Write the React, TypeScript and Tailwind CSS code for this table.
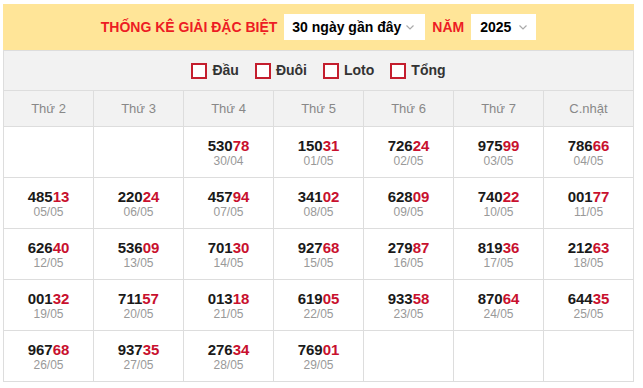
const rows: [string, string][][] = [
  [["", ""], ["", ""], ["53078", "30/04"], ["15031", "01/05"], ["72624", "02/05"], ["97599", "03/05"], ["78666", "04/05"]],
  [["48513", "05/05"], ["22024", "06/05"], ["45794", "07/05"], ["34102", "08/05"], ["62809", "09/05"], ["74022", "10/05"], ["00177", "11/05"]],
  [["62640", "12/05"], ["53609", "13/05"], ["70130", "14/05"], ["92768", "15/05"], ["27987", "16/05"], ["81936", "17/05"], ["21263", "18/05"]],
  [["00132", "19/05"], ["71157", "20/05"], ["01318", "21/05"], ["61905", "22/05"], ["93358", "23/05"], ["87064", "24/05"], ["64435", "25/05"]],
  [["96768", "26/05"], ["93735", "27/05"], ["27634", "28/05"], ["76901", "29/05"], ["", ""], ["", ""], ["", ""]],
];

const days = ["Thứ 2", "Thứ 3", "Thứ 4", "Thứ 5", "Thứ 6", "Thứ 7", "C.nhật"];

function Chevron() {
  return (
    <svg className="w-[10px] h-[10px] text-[#aaa]" viewBox="0 0 10 10" fill="none" stroke="currentColor" strokeWidth={1.2}>
      <path d="M1.5 3.5l3.5 3.5 3.5-3.5" />
    </svg>
  );
}

function Check({ label }: { label: string }) {
  return (
    <label className="flex items-center gap-[5px]">
      <span className="w-4 h-4 border-2 border-[#c41e2e] bg-white" />
      <span className="text-[14px] font-bold text-[#333]">{label}</span>
    </label>
  );
}

export default function App() {
  return (
    <div className="ml-[3px] mt-[4px] w-[631px] font-['Liberation_Sans',Arial,sans-serif]">
      {/* title bar */}
      <div className="h-[46px] bg-[#ffe598] flex items-center justify-center">
        <span className="text-[14px] font-bold text-[#ed1c24] mr-[7px]">THỐNG KÊ GIẢI ĐẶC BIỆT</span>
        <div className="h-[26px] w-[141px] bg-white flex items-center justify-between pl-[8px] pr-[10px]">
          <span className="text-[14px] font-bold text-black">30 ngày gần đây</span>
          <Chevron />
        </div>
        <span className="text-[14px] font-bold text-[#ed1c24] mx-[7px]">NĂM</span>
        <div className="h-[26px] w-[65px] bg-white flex items-center justify-between pl-[9px] pr-[8px]">
          <span className="text-[14px] font-bold text-black">2025</span>
          <Chevron />
        </div>
      </div>

      <div className="border-l border-t border-[#ddd]">
        {/* filters */}
        <div className="h-[40px] bg-[#f2f2f2] border-r border-b border-[#ddd] flex items-center justify-center gap-4">
          <Check label="Đầu" />
          <Check label="Đuôi" />
          <Check label="Loto" />
          <Check label="Tổng" />
        </div>

        <div className="grid grid-cols-7">
          {days.map((d) => (
            <div key={d} className="h-[36px] bg-[#f2f2f2] border-r border-b border-[#ddd] flex items-center justify-center text-[13px] text-[#888]">
              {d}
            </div>
          ))}
          {rows.flat().map(([num, date], i) => (
            <div key={i} className="h-[51px] bg-white border-r border-b border-[#ddd] flex flex-col items-center justify-center">
              {num && (
                <>
                  <span className="text-[15px] leading-[17px] font-bold text-[#1a1a1a]">
                    {num.slice(0, 3)}
                    <span className="text-[#c8102e]">{num.slice(3)}</span>
                  </span>
                  <span className="text-[12px] leading-[14px] text-[#999]">{date}</span>
                </>
              )}
            </div>
          ))}
        </div>
      </div>
    </div>
  );
}
